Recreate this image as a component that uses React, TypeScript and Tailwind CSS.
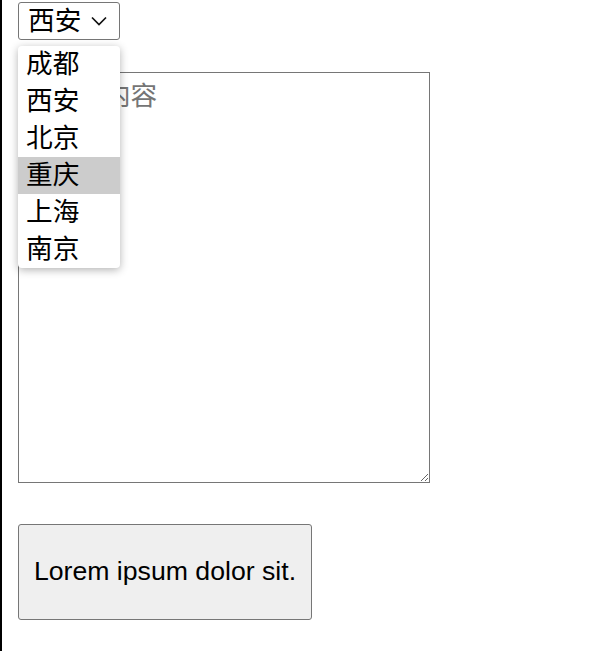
const cities = ["成都", "西安", "北京", "重庆", "上海", "南京"];

const cjk = "font-['Liberation_Sans','Noto_Sans_CJK_SC',sans-serif]";

const App = () => (
  <div className={`min-h-screen border-l-2 border-black bg-white pl-4 pt-0.5 ${cjk}`}>
    <div className="relative w-[102px]">
      <div className="flex h-[38px] w-[102px] items-center rounded-[3px] border border-[#767676] pl-[9px] text-[26.67px] leading-none text-black">
        <span className="w-[63px] shrink-0">西安</span>
        <svg className="shrink-0" width="16" height="10" viewBox="0 0 16 10" fill="none">
          <path d="M1 1.5 L8 8.5 L15 1.5" stroke="#111" strokeWidth="1.7" />
        </svg>
      </div>
      <ul className="absolute left-0 top-[44px] z-10 w-[102px] overflow-hidden rounded-[4px] bg-white shadow-[0_2px_8px_rgba(0,0,0,0.3)]">
        {cities.map((c) => (
          <li
            key={c}
            className={`flex h-[37px] items-center pl-[8px] text-[26.67px] leading-none text-black ${
              c === "重庆" ? "bg-[#cccccc]" : ""
            }`}
          >
            {c}
          </li>
        ))}
      </ul>
    </div>
    <textarea
      placeholder="请输入内容"
      className={`mt-8 block h-[411px] w-[412px] rounded-none border border-[#767676] px-[5px] py-[7px] text-[26.67px] leading-[1.2] text-black placeholder:text-[#757575] ${cjk}`}
    />
    <button className="mt-[41px] block h-[96px] w-[294px] rounded-[3px] border border-[#767676] bg-[#efefef] pb-[3px] text-[26.67px] text-black font-['Liberation_Sans',Arial,sans-serif]">
      Lorem ipsum dolor sit.
    </button>
  </div>
);

export default App;
